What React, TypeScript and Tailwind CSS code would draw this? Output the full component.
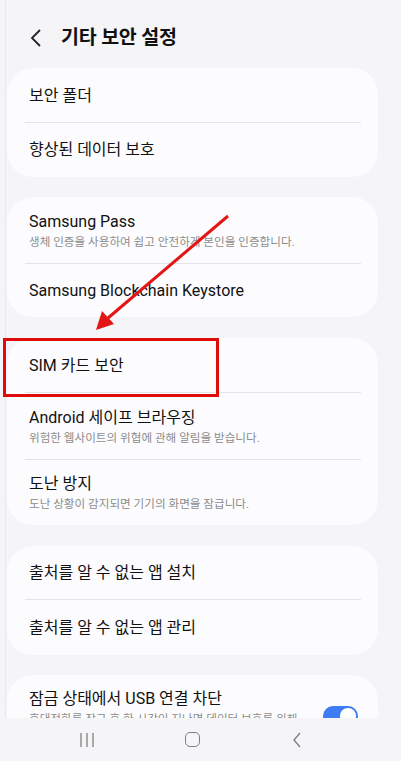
import React from "react";

const font = { fontFamily: 'Roboto, "Noto Sans CJK KR", sans-serif' };

function Row({ title, sub, h, divider }: { title: string; sub?: string; h: string; divider?: boolean }) {
  return (
    <div className={`relative flex flex-col justify-center pl-[22px] pr-[20px] ${h}`}>
      <div className="text-[16px] leading-[20px] text-[#111]">{title}</div>
      {sub && <div className="text-[11.6px] leading-[16px] text-[#8c8c8c] mt-[2px]">{sub}</div>}
      {divider && <div className="absolute bottom-0 left-[18px] right-[17px] h-px bg-[#e4e4e6]" />}
    </div>
  );
}

function Card({ children, className = "" }: { children: React.ReactNode; className?: string }) {
  return <div className={`w-[371px] rounded-[26px] bg-[#fcfcfe] ${className}`}>{children}</div>;
}

export default function App() {
  return (
    <div className="relative w-[401px] h-[761px] bg-[#f5f5f7] overflow-hidden" style={font}>
      <div className="h-[718px] overflow-hidden pl-[5px]">
        <div className="h-full border-l border-[#e9e9eb] pl-[1px]">
          <div className="h-[68px] flex items-center">
            <svg width="14" height="20" viewBox="0 0 14 20" className="ml-[22px] mt-[8px]">
              <path d="M11 2 L3 10 L11 18" fill="none" stroke="#222" strokeWidth="1.8" />
            </svg>
            <div className="ml-[18px] mt-[7px] text-[19.5px] font-bold text-[#111] tracking-[-0.2px]">기타 보안 설정</div>
          </div>
          <Card>
            <Row title="보안 폴더" h="h-[55px]" divider />
            <Row title="향상된 데이터 보호" h="h-[54px]" />
          </Card>
          <Card className="mt-[20px]">
            <Row title="Samsung Pass" sub="생체 인증을 사용하여 쉽고 안전하게 본인을 인증합니다." h="h-[67px]" divider />
            <Row title="Samsung Blockchain Keystore" h="h-[53px]" />
          </Card>
          <Card className="mt-[21px]">
            <Row title="SIM 카드 보안" h="h-[55px]" divider />
            <Row title="Android 세이프 브라우징" sub="위험한 웹사이트의 위협에 관해 알림을 받습니다." h="h-[67px]" divider />
            <Row title="도난 방지" sub="도난 상황이 감지되면 기기의 화면을 잠급니다." h="h-[65px]" />
          </Card>
          <Card className="mt-[21px]">
            <Row title="출처를 알 수 없는 앱 설치" h="h-[54px]" divider />
            <Row title="출처를 알 수 없는 앱 관리" h="h-[55px]" />
          </Card>
          <Card className="mt-[20px] h-[80px]">
            <div className="flex items-start pl-[22px] pr-[20px] pt-[14px]">
              <div className="flex-1">
                <div className="text-[16px] leading-[20px] text-[#111]">잠금 상태에서 USB 연결 차단</div>
                <div className="text-[11.6px] leading-[16px] text-[#8c8c8c] mt-[2px]">휴대전화를 잠근 후 한 시간이 지나면 데이터 보호를 위해</div>
              </div>
              <div className="relative mt-[17px] ml-[8px] w-[35px] h-[20px] rounded-full bg-[#3e7bf7]">
                <div className="absolute right-[2px] top-[2px] w-[16px] h-[16px] rounded-full bg-white" />
              </div>
            </div>
          </Card>
        </div>
      </div>
      <div className="h-[43px] bg-[#f5f5f7] flex items-center">
        <svg width="16" height="16" viewBox="0 0 16 16" className="ml-[79px]">
          <path d="M2 1 V15 M8 1 V15 M14 1 V15" stroke="#808080" strokeWidth="1.3" />
        </svg>
        <div className="ml-[90px] w-[15px] h-[15px] rounded-[5px] border-[1.5px] border-[#808080]" />
        <svg width="12" height="18" viewBox="0 0 12 18" className="ml-[91px]">
          <path d="M9 2 L3 9 L9 16" fill="none" stroke="#808080" strokeWidth="1.4" />
        </svg>
      </div>

      <div className="absolute left-[3px] top-[338px] w-[216px] h-[59px] border-[3px] border-[#e00b0b]" />
      <svg className="absolute left-0 top-0" width="401" height="761" viewBox="0 0 401 761">
        <line x1="228" y1="216" x2="108" y2="318" stroke="#e31515" strokeWidth="3" />
        <polygon points="96,330 102,311 114,324" fill="#e31515" />
      </svg>
    </div>
  );
}
